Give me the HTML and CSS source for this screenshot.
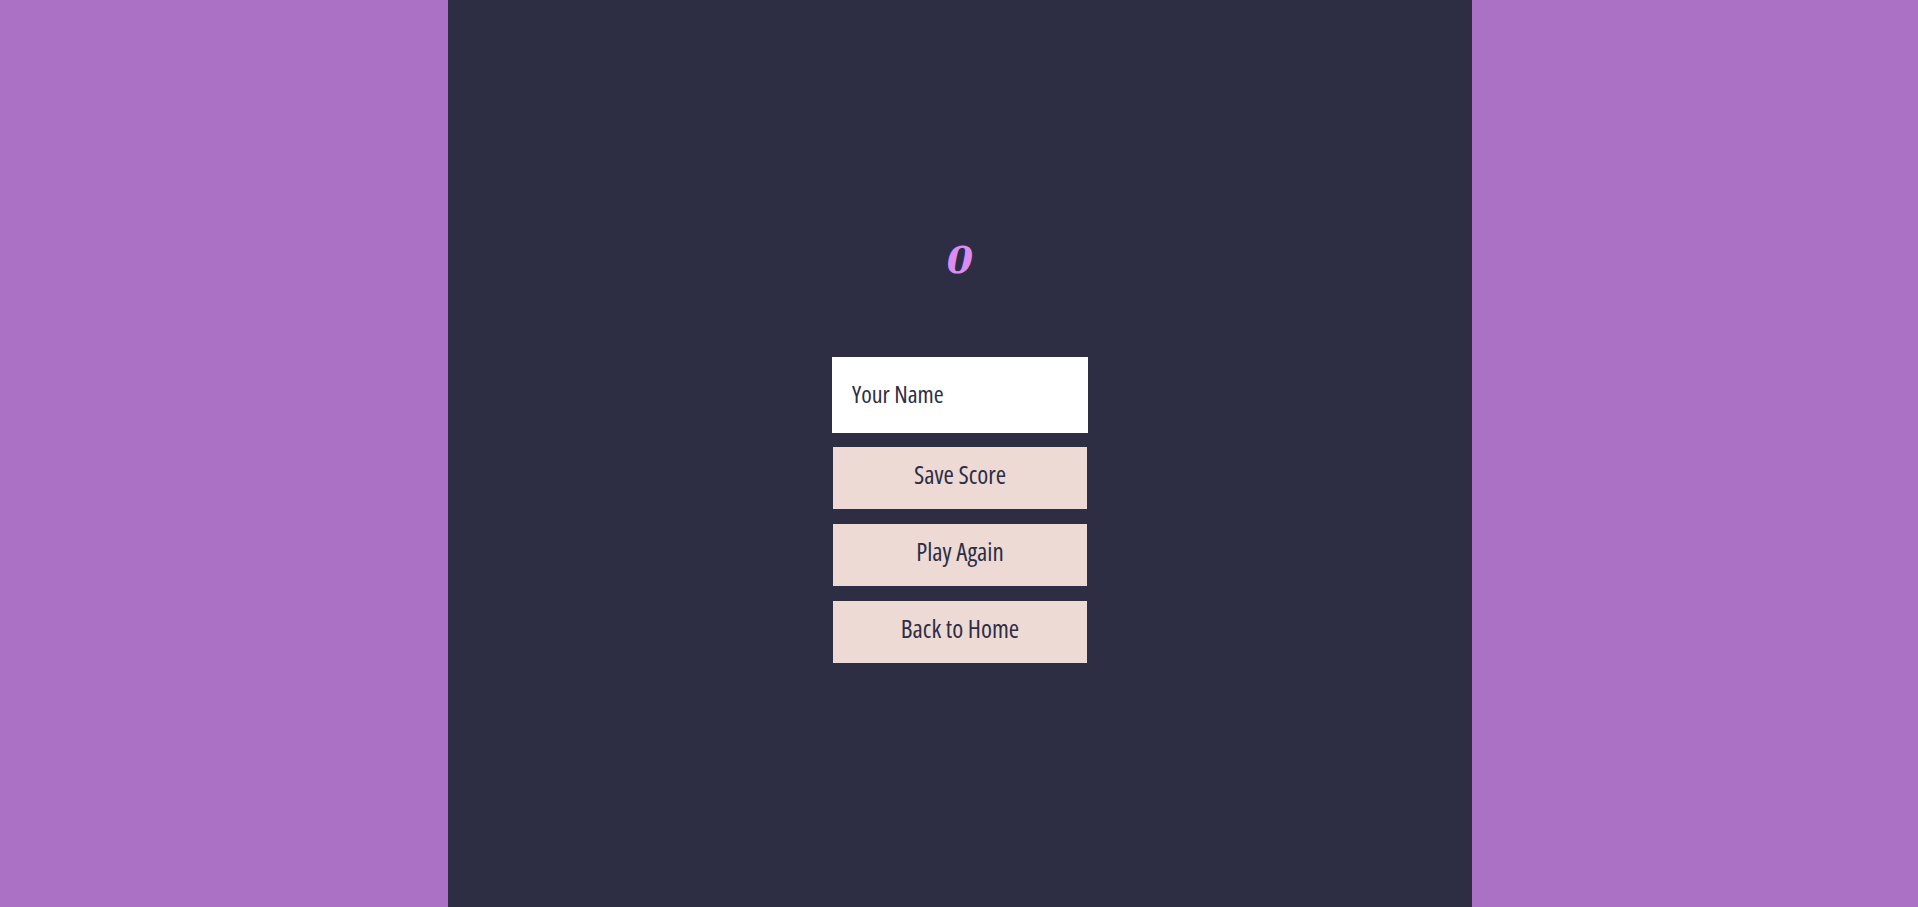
FILE: index.html
```html
<!DOCTYPE html>
<html lang="en">
<head>
<meta charset="utf-8">
<title>End</title>
<link rel="stylesheet" href="styles.css">
</head>
<body>
<main class="column">
  <div class="end">
    <h1 class="score">0</h1>
    <form class="save-form">
      <input class="name-input" type="text" placeholder="Your Name">
      <button class="btn" type="button">Save Score</button>
      <a class="btn" href="#">Play Again</a>
      <a class="btn" href="#">Back to Home</a>
    </form>
  </div>
</main>
</body>
</html>
```

FILE: styles.css
```css
* { box-sizing: border-box; }
html, body { margin: 0; padding: 0; height: 100%; }
body {
  background: #ab71c4;
  font-family: "Open Sans", "DejaVu Sans Condensed", sans-serif;
  font-stretch: 75%;
  font-weight: 370;
  color: #2d2e44;
  overflow: hidden;
}
.column {
  width: 1024px;
  height: 100vh;
  margin-left: calc(50% - 511px);
  background: #2d2e43;
  padding-top: 240px;
}
.end {
  display: flex;
  flex-direction: column;
  align-items: center;
}
.score {
  margin: 0;
  height: 40px;
  line-height: 40px;
  font-family: "DejaVu Serif", serif;
  font-weight: bold;
  font-style: italic;
  font-stretch: normal;
  font-size: 38px;
  color: #da8cf2;
}
.save-form {
  margin-top: 77px;
  display: flex;
  flex-direction: column;
  align-items: center;
}
.name-input {
  width: 256px;
  height: 76px;
  border: none;
  outline: none;
  background: #ffffff;
  padding: 0 0 4px 20px;
  font-family: inherit;
  font-stretch: 75%;
  font-weight: 370;
  font-size: 24px;
  color: #2d2e44;
}
.name-input::placeholder { color: #2d2e44; opacity: 1; }
.btn {
  width: 254px;
  height: 62px;
  margin-top: 15px;
  border: none;
  background: #eddad5;
  display: flex;
  align-items: center;
  justify-content: center;
  font-family: inherit;
  font-stretch: 75%;
  font-weight: 370;
  font-size: 25px;
  color: #2d2e44;
  text-decoration: none;
  padding: 0 0 8px 0;
  cursor: pointer;
}
.name-input + .btn { margin-top: 14px; }
```
